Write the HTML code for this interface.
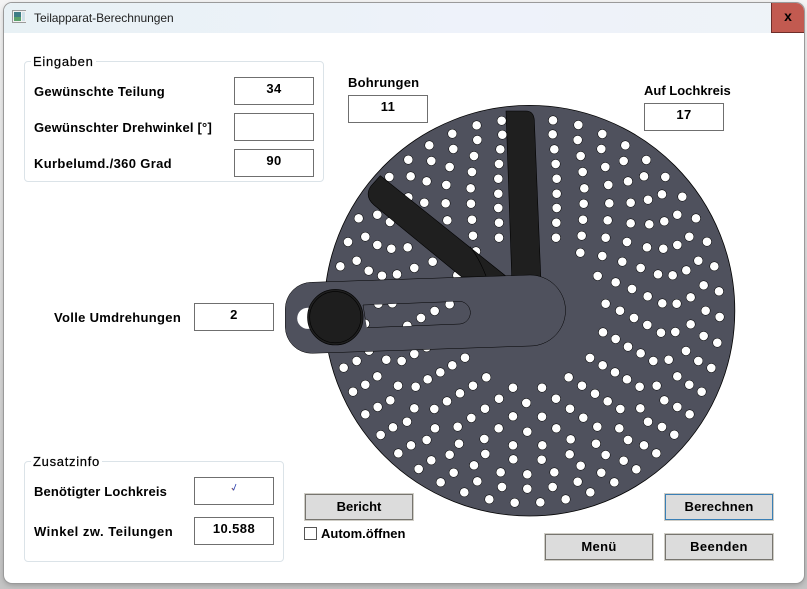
<!DOCTYPE html>
<html><head><meta charset="utf-8"><style>
html,body{margin:0;padding:0}
body{width:807px;height:589px;overflow:hidden;position:relative;background:linear-gradient(#f4f4f4 0,#d8d8d8 60%,#c4c4c4 100%);font-family:"Liberation Sans",sans-serif;color:#000}
#win{position:absolute;left:4px;top:3px;width:800px;height:580px;background:#fff;border-radius:8px;box-shadow:0 0 0 1px #9a9a9a,0 2px 6px rgba(0,0,0,.25);overflow:hidden}
#bar{position:absolute;left:0;top:0;width:800px;height:30px;background:linear-gradient(90deg,#e8f1f5,#eef2fa 60%,#eef3f7)}
#x{position:absolute;right:0;top:0;width:32px;height:29px;background:#c25a50;border-left:1px solid #6e2d29;border-bottom:1px solid #6e2d29;font:bold 14px "Liberation Sans",sans-serif;text-align:center;line-height:27px}
.t{position:absolute;white-space:nowrap;font-size:13px;font-weight:bold;line-height:16px;color:#000}
.box{position:absolute;width:78px;height:26px;border:1px solid #6f6f6f;background:#fff;text-align:center;font-size:13px;font-weight:bold;line-height:21px;letter-spacing:.4px}
.grp{position:absolute;border:1px solid #dbe3e8;border-radius:4px;box-sizing:border-box}
.leg{position:absolute;background:#fff;font-size:13px;line-height:16px;padding:0 2px;letter-spacing:.7px;-webkit-text-stroke:.2px #000}
.btn{position:absolute;width:106px;height:24px;background:#dcdcdc;border:1px solid #77756f;outline:1px solid #cfcdc6;text-align:center;font-size:13px;font-weight:bold;line-height:24px;left:0;top:0}
svg{position:absolute;left:0;top:0}
</style></head><body>
<div id="win"><div id="bar"></div><div id="x">x</div></div>
<svg width="14" height="14" style="left:12px;top:10px" viewBox="0 0 14 14"><rect x=".5" y=".5" width="14" height="12" fill="#f2f2f2" stroke="#9a9a9a"/><rect x="2" y="2" width="7" height="9" fill="#3f7d86"/><rect x="2" y="7" width="7" height="4" fill="#5aa06a"/><rect x="10" y="2" width="3" height="9" fill="#cfe0e8"/></svg>
<div class="t" style="left:34px;top:10px;font-weight:normal;font-size:12px;letter-spacing:-.05px;color:#222">Teilapparat-Berechnungen</div>

<div class="grp" style="left:24px;top:61px;width:300px;height:121px"></div>
<div class="leg" style="left:31px;top:54px">Eingaben</div>
<div class="t" style="left:34px;top:84px;letter-spacing:.27px">Gewünschte Teilung</div>
<div class="t" style="left:34px;top:120px;letter-spacing:.2px">Gewünschter Drehwinkel [°]</div>
<div class="t" style="left:34px;top:156px;letter-spacing:.34px">Kurbelumd./360 Grad</div>
<div class="box" style="left:234px;top:77px">34</div>
<div class="box" style="left:234px;top:113px"></div>
<div class="box" style="left:234px;top:149px">90</div>

<div class="t" style="left:348px;top:75px;letter-spacing:.22px">Bohrungen</div>
<div class="box" style="left:348px;top:95px">11</div>
<div class="t" style="left:644px;top:83px;letter-spacing:0">Auf Lochkreis</div>
<div class="box" style="left:644px;top:103px">17</div>
<div class="t" style="left:54px;top:310px;letter-spacing:.31px">Volle Umdrehungen</div>
<div class="box" style="left:194px;top:303px">2</div>

<div class="grp" style="left:24px;top:461px;width:260px;height:101px"></div>
<div class="leg" style="left:31px;top:454px">Zusatzinfo</div>
<div class="t" style="left:34px;top:484px;letter-spacing:.15px">Benötigter Lochkreis</div>
<div class="t" style="left:34px;top:524px;letter-spacing:.5px">Winkel zw. Teilungen</div>
<div class="box" style="left:194px;top:477px"></div>
<div class="box" style="left:194px;top:517px">10.588</div>

<svg width="807" height="589" viewBox="0 0 807 589">
<defs>
<path id="z3" d="M545 92h0M547 134h0M541 178h0M537 222h0M535 266h0M535 311h0M535 354h0M537 398h0M537 443h0M470 106h0M472 150h0M462 198h0M456 246h0M452 295h0M453 341h0M456 389h0M459 437h0M397 131h0M400 177h0M389 231h0M379 285h0M377 340h0M382 391h0M328 166h0M334 213h0M320 274h0M313 338h0M265 209h0M272 259h0M208 261h0M116 385h0M172 374h0M210 396h0M136 440h0M84 456h0M172 465h0M214 476h0M263 472h0M110 512h0M61 529h0M146 542h0M186 557h0M231 553h0M283 534h0M338 515h0M412 556h0M468 484h0M265 322h0"/>
<path id="z4" d="M69 91h0M68 133h0M73 178h0M77 222h0M80 266h0M80 311h0M80 354h0M79 398h0M78 443h0M145 105h0M143 150h0M152 198h0M158 246h0M163 295h0M161 341h0M159 389h0M155 437h0M151 488h0M217 132h0M214 177h0M226 231h0M235 285h0M238 340h0M233 391h0M227 443h0M217 498h0M286 166h0M281 213h0M294 274h0M302 338h0M302 400h0M291 456h0M277 515h0M203 558h0M349 210h0M342 259h0M354 329h0M358 403h0M351 472h0M332 534h0M257 577h0M406 261h0M396 313h0M403 394h0M400 476h0M384 553h0M306 597h0M457 320h0M442 374h0M442 465h0M428 556h0M353 619h0M498 385h0M478 440h0M469 541h0M482 622h0M531 455h0M505 512h0M521 586h0M553 529h0M567 604h0"/>
<path id="z5" d="M227 11h0M397 10h0M440 11h0M270 32h0M527 32h0M569 51h0M312 54h0M352 75h0M393 98h0M436 96h0M482 73h0M219 97h0M257 117h0M294 140h0M332 160h0M370 183h0M416 179h0M468 153h0M521 108h0M562 128h0M505 183h0M544 204h0M180 174h0M218 196h0M255 217h0M291 238h0M329 260h0M380 257h0M442 229h0M478 254h0M515 275h0M116 232h0M156 257h0M195 281h0M233 304h0M271 327h0M331 325h0M403 301h0M442 321h0M479 343h0M36 263h0M78 296h0M120 326h0M160 353h0M202 380h0M268 385h0M354 365h0M396 381h0M433 404h0M36 350h0M79 385h0M122 418h0M198 431h0M294 420h0M342 436h0M379 460h0M37 436h0M119 463h0M227 465h0M281 482h0M319 508h0M35 479h0M152 497h0M214 518h0M253 547h0M73 517h0M143 545h0M181 577h0M68 561h0M107 598h0M31 607h0"/>
<path id="z6" d="M71 83h0M110 63h0M147 32h0M199 59h0M245 63h0M283 42h0M320 22h0M435 53h0M397 76h0M361 97h0M323 118h0M287 140h0M234 137h0M172 109h0M136 134h0M99 155h0M499 112h0M459 137h0M420 160h0M381 184h0M343 207h0M283 205h0M211 181h0M173 201h0M136 223h0M579 143h0M537 176h0M495 206h0M454 234h0M413 260h0M345 265h0M261 245h0M219 262h0M182 285h0M619 189h0M579 229h0M536 265h0M493 297h0M417 311h0M320 300h0M273 316h0M235 340h0M622 275h0M579 316h0M496 342h0M389 344h0M334 361h0M296 387h0M580 358h0M462 376h0M401 398h0M362 427h0M622 403h0M542 397h0M472 424h0M546 441h0M433 457h0M622 446h0M508 478h0M584 488h0"/>
<path id="z2" d="M325 431h0M367 430h0M539 433h0M494 453h0M453 474h0M412 497h0M285 491h0"/>
<clipPath id="slot"><path d="M363 305L460 301.3A11.4 11.4 0 0 1 460 324L366.7 327.7Z"/></clipPath>
</defs>
<circle cx="529.5" cy="310.7" r="205.3" fill="#4f515d" stroke="#000" stroke-width=".8"/>
<g stroke-linecap="round" fill="none">
<g transform="translate(320 90) scale(.3333)"><use href="#z3" stroke="#000" stroke-width="29"/><use href="#z3" stroke="#fff" stroke-width="26"/></g>
<g transform="translate(530 90) scale(.3333)"><use href="#z4" stroke="#000" stroke-width="29"/><use href="#z4" stroke="#fff" stroke-width="26"/></g>
<g transform="translate(530 300) scale(.3333)"><use href="#z5" stroke="#000" stroke-width="29"/><use href="#z5" stroke="#fff" stroke-width="26"/></g>
<g transform="translate(320 340) scale(.3333)"><use href="#z6" stroke="#000" stroke-width="29"/><use href="#z6" stroke="#fff" stroke-width="26"/></g>
</g>
<path d="M506 111H526Q533.5 111 534.3 120L540.8 278H511.8Z" fill="#1f1f1f" stroke="#000" stroke-width=".6"/>
<path d="M380.3 175.7L507 277H461.7L374 205Q364 196 371 186Z" fill="#1f1f1f" stroke="#000" stroke-width=".6"/>
<path d="M470 246.7Q479 258 486 276" fill="none" stroke="#000" stroke-width=".6"/>
<path d="M311.7 282.3L530 275A35.5 35.5 0 0 1 530 346L311.7 353.3A26.5 26.5 0 0 1 285.3 327V309A26.5 26.5 0 0 1 311.7 282.3Z" fill="#4f515d" stroke="#000" stroke-width=".5"/>
<circle cx="307.8" cy="318.3" r="10.6" fill="#fff"/>
<path d="M363 305L460 301.3A11.4 11.4 0 0 1 460 324L366.7 327.7Z" fill="#4f515d" stroke="#000" stroke-width=".5"/>
<g clip-path="url(#slot)" stroke-linecap="round" fill="none"><g transform="translate(270 160) scale(.3333)"><use href="#z2" stroke="#000" stroke-width="29"/><use href="#z2" stroke="#fff" stroke-width="26"/></g></g>
<circle cx="335.3" cy="317.2" r="27.8" fill="#1f1f1f" stroke="#000" stroke-width=".6"/>
<circle cx="335.3" cy="317.2" r="25.6" fill="#1e1e1e" stroke="#000" stroke-width=".6"/>
<path d="M232.2 488l1.5 2 2.3-6" fill="none" stroke="#2b3fb0" stroke-width=".8"/>
<path d="M231.6 488.2l1.4 2" fill="none" stroke="#d88a50" stroke-width=".6"/>
</svg>

<div class="btn" style="left:305px;top:494px">Bericht</div>
<div class="btn" style="left:665px;top:494px;border-color:#3a7fb5;letter-spacing:.2px">Berechnen</div>
<div class="btn" style="left:545px;top:534px;letter-spacing:.3px">Menü</div>
<div class="btn" style="left:665px;top:534px;letter-spacing:.4px">Beenden</div>
<div style="position:absolute;left:304px;top:527px;width:11px;height:11px;border:1px solid #555;background:#fff"></div>
<div class="t" style="left:321px;top:526px;letter-spacing:0">Autom.öffnen</div>
</body></html>
